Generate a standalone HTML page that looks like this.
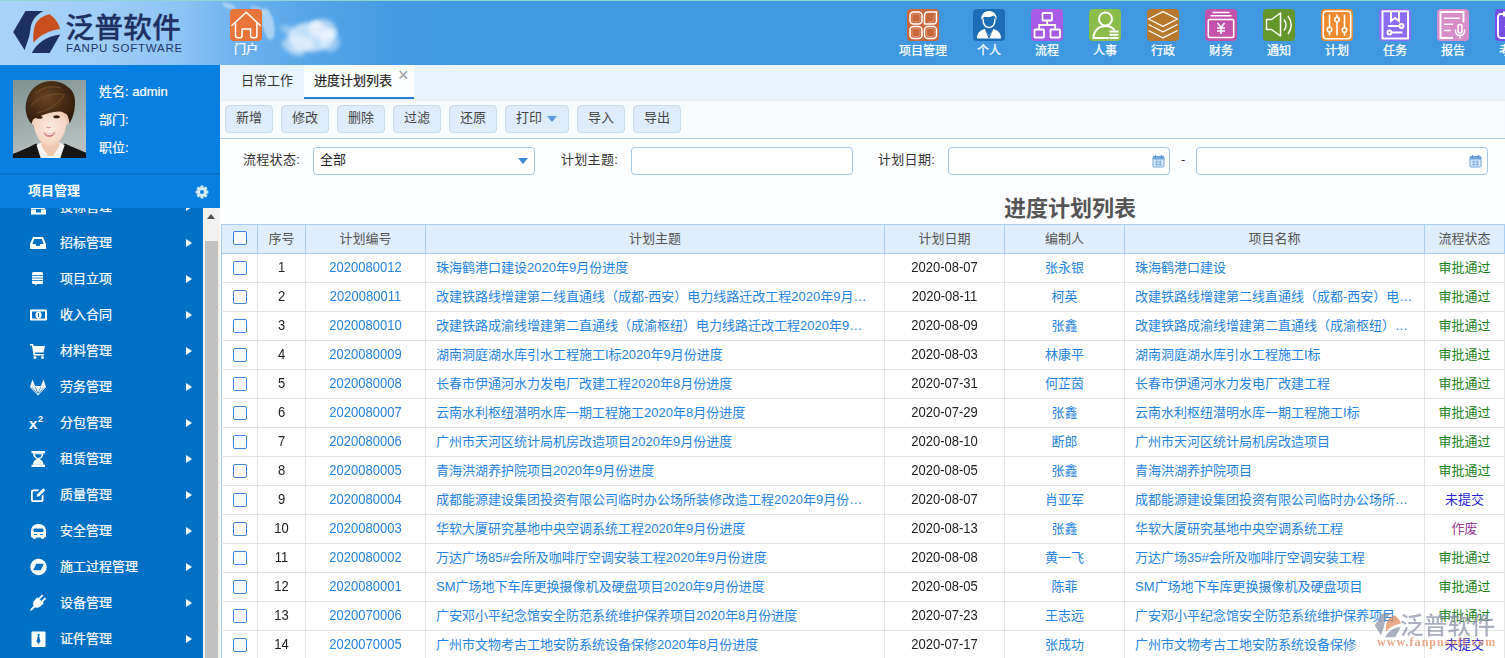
<!DOCTYPE html>
<html lang="zh-CN">
<head>
<meta charset="utf-8">
<title>进度计划列表</title>
<style>
*{box-sizing:border-box;margin:0;padding:0}
html,body{width:1505px;height:658px;overflow:hidden;background:#fcfeff}
body{font-family:"Liberation Sans","Noto Sans CJK SC",sans-serif;font-size:13px;color:#333;position:relative}
.abs{position:absolute}
#hdr{left:0;top:0;width:1505px;height:65px;background:linear-gradient(90deg,#a9d3f9 0px,#a0cef8 100px,#8dc4f4 180px,#6fb3ee 235px,#55a5e8 310px,#459be2 390px,#3f98e0 460px,#3f98e0 100%);overflow:hidden}
#hdr .topline{left:0;top:0;width:1505px;height:1px;background:#8fd6d2}
.cloud{border-radius:50%;filter:blur(3px);background:rgba(255,255,255,.75)}
.logo-cn{left:65.5px;top:7.5px;font-size:28.6px;font-weight:500;color:#1e2f62;letter-spacing:0.3px;line-height:40px;white-space:nowrap;-webkit-text-stroke:.3px #1e2f62}
.logo-en{left:66px;top:41px;font-size:11.5px;color:#1f3468;letter-spacing:0.76px;line-height:14px;white-space:nowrap}
.nav{top:9px;width:60px;text-align:center;color:#fff;font-size:12px;line-height:14px;white-space:nowrap;-webkit-text-stroke:.25px #fff}
.nav .ic{display:block;margin:0 auto 2.5px;width:32px;height:32px;border-radius:4px}
.nav svg{display:block}
#side{left:0;top:65px;width:220px;height:593px;background:#0880e2}
.pl{left:99px;color:#fff;font-size:13px;line-height:16px;white-space:nowrap;-webkit-text-stroke:.2px #fff}
#side .sep{left:0;top:107.5px;width:220px;height:2.5px;background:#0b70c8}
#side .title{left:28px;top:117px;color:#fff;font-weight:bold;font-size:13px;line-height:18px}
#menu{left:0;top:143px;width:203px;height:450px;background:#0070c4;overflow:hidden}
.mi{left:0;width:203px;height:36px;color:#fff;font-size:13px;line-height:36px;-webkit-text-stroke:.2px #fff}
.mi .t{position:absolute;left:60px;top:0;white-space:nowrap}
.mi .ar{position:absolute;left:186px;top:13.5px;width:0;height:0;border-left:6px solid #fff;border-top:4.5px solid transparent;border-bottom:4.5px solid transparent}
.mi svg{position:absolute;left:29px;top:9px}
#sb{left:203px;top:143px;width:17px;height:450px;background:#f1f1f1}
#sb .th{left:2px;top:33px;width:13px;height:420px;background:#c1c1c1}
#sb .up{left:4px;top:6px;width:0;height:0;border-bottom:5px solid #505050;border-left:4.5px solid transparent;border-right:4.5px solid transparent}
#tabs{left:220px;top:65px;width:1285px;height:34px;background:#e8f4fe}
.tab{top:0;height:34px;line-height:32px;font-size:13px;color:#333;white-space:nowrap}
.tab.act{background:#fcfeff;border-bottom:2px solid #2b7fd0;color:#222;-webkit-text-stroke:.2px #222}
#tb{left:220px;top:99px;width:1285px;height:40px;background:#f8fbff;border-bottom:1px solid #a9cdee;box-shadow:inset 0 3px 3px -2px rgba(150,180,210,.3)}
.btn{top:6px;height:28px;border:1px solid #c6dcf1;background:#deedfb;border-radius:4px;color:#444;font-size:13px;line-height:24px;text-align:center;white-space:nowrap}
.lbl{top:151px;font-size:13px;color:#333;line-height:18px;white-space:nowrap;letter-spacing:.3px}
.inp{top:147px;height:28px;border:1px solid #a5c9ea;border-radius:4px;background:#fff}
#ttl{left:220px;top:193.5px;width:1700px;text-align:center;font-size:22px;font-weight:bold;color:#555;line-height:30px}
#grid{left:221px;top:224px;width:1283px;border-collapse:collapse;table-layout:fixed;font-size:13px}
#grid th{height:29px;background:#deeefc;border:1px solid #a9cdee;font-weight:normal;color:#555;text-align:center;padding:0}
#grid thead tr{border-top:1px solid #8fc0ec}
#grid td{height:29px;border:1px solid #e4e4e4;text-align:center;padding:0;white-space:nowrap;overflow:hidden;background:#fff}
#grid td:first-child,#grid th:first-child{border-left:1px solid #a9cdee}
#grid td.n{color:#222}
#grid td.a,#grid td.l{color:#2683de}
.d{display:inline-block;transform:scaleY(1.15);transform-origin:50% 81%}
#grid td.l{text-align:left;padding:0 10px}
#grid td.l div{overflow:hidden;text-overflow:ellipsis;white-space:nowrap}
#grid td{padding-bottom:2px}
#grid th,#grid td.c,#grid td.l{padding-bottom:4px}
.s1{color:#1a821a}.s2{color:#2a1fd8}.s3{color:#9a3a9a}
.cb{display:inline-block;width:14px;height:14px;border:1px solid #3b86d8;border-radius:2px;background:#fff;vertical-align:middle}
</style>
</head>
<body>
<div id="hdr" class="abs">
  <svg class="abs" style="left:200px;top:0" width="170" height="65" viewBox="200 0 170 65">
    <defs><filter id="cb" x="-30%" y="-30%" width="160%" height="160%"><feGaussianBlur stdDeviation="2.200"/></filter><filter id="cb2" x="-30%" y="-30%" width="160%" height="160%"><feGaussianBlur stdDeviation="1.300"/></filter></defs>
    <g filter="url(#cb)" fill="#fff">
      <ellipse cx="311" cy="37" rx="23" ry="15" opacity=".62"/>
      <ellipse cx="322" cy="29" rx="14" ry="10" opacity=".5"/>
      <ellipse cx="298" cy="44" rx="16" ry="9" opacity=".45"/>
      <ellipse cx="330" cy="42" rx="10" ry="10" opacity=".4"/>
      <ellipse cx="288" cy="30" rx="8" ry="4" opacity=".35" transform="rotate(25 288 30)"/>
      <ellipse cx="296" cy="52" rx="9" ry="4" opacity=".35" transform="rotate(20 296 52)"/>
    </g>
    <g filter="url(#cb2)" fill="#fff">
      <ellipse cx="268" cy="24" rx="6" ry="16" opacity=".45" transform="rotate(-12 268 24)"/>
      <ellipse cx="258" cy="10" rx="8" ry="3" opacity=".3" transform="rotate(25 258 10)"/>
      <ellipse cx="229" cy="6" rx="7" ry="2.500" opacity=".4" transform="rotate(20 229 6)"/>
      <ellipse cx="316" cy="24" rx="6" ry="4" opacity=".4"/>
      <ellipse cx="333" cy="33" rx="5" ry="5" opacity=".35"/>
    </g>
  </svg>
  <div class="abs topline"></div>
  <svg class="abs" style="left:0;top:0" width="70" height="65" viewBox="0 0 70 65">
    <path d="M25.500 11.100H43.300C36 15 31.800 20.500 30.700 27.500 30.200 31 29.700 34 29.200 36.600L24.600 50 13.200 32z" fill="#1e2f62"/>
    <path d="M49.700 14.300C55 18 58.500 23 60.200 28.900 50 30 40 35 33.300 42.600 33 36 33.500 31 34.600 26.600 36.500 20 42 16 49.700 14.300z" fill="#c8501e"/>
    <path d="M60.200 34.400L49.700 53H31.900C36 44 46 36 60.200 34.400z" fill="#1e2f62"/>
  </svg>
  <div class="abs logo-cn">泛普软件</div>
  <div class="abs logo-en">FANPU SOFTWARE</div>
  <div class="nav abs" style="left:216px"><span class="ic" style="background:#e8763a;margin-bottom:1.500px"><svg width="32" height="32" viewBox="0 0 32 32"><g fill="none" stroke="#fff" stroke-width="1.500" stroke-linejoin="round" stroke-linecap="round"><path d="M2 16.500L16.200 3.300 30.300 16.500"/><path d="M5.500 13.500v13q0 2.300 2.300 2.300h2q2.300 0 2.300-2.300v-6.500h8.500v6.500q0 2.300 2.300 2.300h1.700q2.300 0 2.300-2.300v-13"/></g></svg></span>门户</div>
<div class="nav abs" style="left:893px"><span class="ic" style="background:#c8673a"><svg width="32" height="32" viewBox="0 0 32 32"><g fill="none" stroke="#fff" stroke-width="1.500"><rect x="3" y="3" width="12" height="12" rx="3.500"/><path d="M17.500 15v-8.500q0-3.500 3.500-3.500h8.500v8.500q0 3.500-3.500 3.500z"/><rect x="3" y="17.500" width="12" height="12" rx="3.500"/><rect x="17.500" y="17.500" width="12" height="12" rx="3.500"/></g><g fill="none" stroke="#fff" stroke-width=".6" opacity=".5"><rect x="5" y="5" width="8" height="8" rx="2"/><rect x="5" y="19.500" width="8" height="8" rx="2"/><rect x="19.500" y="19.500" width="8" height="8" rx="2"/><path d="M27 6v4q0 3-3 3h-3"/></g></svg></span>项目管理</div>
<div class="nav abs" style="left:959px"><span class="ic" style="background:#1c6db5"><svg width="32" height="32" viewBox="0 0 32 32"><path d="M8.500 11c-1-5 2.500-9 7.500-9s8.500 4 7.500 9c-.5-2-1.500-3.500-3-4.500-2.500 1.500-6 1.800-9 1.200-1.500 1-2.500 2-3 3.300z" fill="#fff"/><path d="M10 9.500c0 5 2 9 6 9s6-4 6-9" fill="none" stroke="#fff" stroke-width="1.300"/><path d="M4 29.500c0-5.500 2.500-8 8-9.500l4 6.500 4-6.500c5.500 1.500 8 4 8 9.500z" fill="#fff"/><path d="M12.500 20.500l3.500 8.500 3.500-8.500M16 22v7" fill="none" stroke="#1c6db5" stroke-width="1"/></svg></span>个人</div>
<div class="nav abs" style="left:1017px"><span class="ic" style="background:#a75be6"><svg width="32" height="32" viewBox="0 0 32 32"><g fill="none" stroke="#fff" stroke-width="1.800"><rect x="11.500" y="4" width="9.500" height="7.500" rx=".8"/><rect x="3.500" y="20.500" width="9.500" height="8" rx=".8"/><rect x="19.500" y="20.500" width="9.500" height="8" rx=".8"/><path d="M16.200 11.500v4.500M8.200 20.500v-4.500h16v4.500"/></g></svg></span>流程</div>
<div class="nav abs" style="left:1075px"><span class="ic" style="background:#8bbd4a"><svg width="32" height="32" viewBox="0 0 32 32"><g fill="none" stroke="#fff" stroke-width="2"><circle cx="16.500" cy="10" r="6.500"/><path d="M20 29H4.500c0-7 5-12 12-12 4 0 7 1.500 9 4"/></g><path d="M20.500 22.500h9M20.500 25.800h9M20.500 29h9" stroke="#fff" stroke-width="2"/></svg></span>人事</div>
<div class="nav abs" style="left:1133px"><span class="ic" style="background:#b7782c"><svg width="32" height="32" viewBox="0 0 32 32"><g fill="none" stroke="#fff" stroke-width="1.300" stroke-linejoin="round"><path d="M16 2.700l14.500 7.300L16 17.300 1.500 10z"/><path d="M1.500 15.500L16 22.800l14.500-7.300"/><path d="M1.500 21.500L16 28.800l14.500-7.300"/></g></svg></span>行政</div>
<div class="nav abs" style="left:1191px"><span class="ic" style="background:#c352ad"><svg width="32" height="32" viewBox="0 0 32 32"><g fill="none" stroke="#fff" stroke-width="1.600"><path d="M7.500 3.500h17M5.500 6.800h21"/><rect x="3.300" y="10.500" width="25.400" height="18" rx="1.500"/><path d="M12.500 14l3.500 4.500 3.500-4.500M16 18.500v6.500M12 19h8M12 22h8"/></g></svg></span>财务</div>
<div class="nav abs" style="left:1249px"><span class="ic" style="background:#64962c"><svg width="32" height="32" viewBox="0 0 32 32"><g fill="none" stroke="#fff" stroke-width="1.500" stroke-linejoin="round"><path d="M3.500 10.500h5l9-6.500v23l-9-6.500h-5z"/><path d="M21 10.500q4 5.500 0 11M25 7q6.500 9 0 18"/></g></svg></span>通知</div>
<div class="nav abs" style="left:1307px"><span class="ic" style="background:#ef8a2e"><svg width="32" height="32" viewBox="0 0 32 32"><g fill="none" stroke="#fff" stroke-width="1.600"><rect x="2.300" y="2.300" width="27.400" height="27.400" rx="3"/><path d="M8.500 5.500v12.500M8.500 23v3.500M16 5.500v2.500M16 13v13.500M23.500 5.500v13M23.500 23.500v3"/><circle cx="8.500" cy="20.500" r="2.300"/><circle cx="16" cy="10.500" r="2.300"/><circle cx="23.500" cy="21" r="2.300"/></g></svg></span>计划</div>
<div class="nav abs" style="left:1365px"><span class="ic" style="background:#8c6df4"><svg width="32" height="32" viewBox="0 0 32 32"><g fill="none" stroke="#fff" stroke-width="1.900"><rect x="3.500" y="2.300" width="25.500" height="27.200"/><path d="M12 2.500v9.500l4-3 4 3v-9.500M9 17h11M12.500 23.500h11"/><circle cx="22.500" cy="17" r="2"/><circle cx="10.500" cy="23.500" r="2"/></g></svg></span>任务</div>
<div class="nav abs" style="left:1423px"><span class="ic" style="background:#d78dc8"><svg width="32" height="32" viewBox="0 0 32 32"><g fill="none" stroke="#fff" stroke-width="1.900"><path d="M16 29H3.500v-26h23V13.500"/><path d="M7 9.300h15.500M7 15.200h9M7 21.500h7" stroke-width="1.500"/><rect x="21" y="15.500" width="4" height="8.500" rx="2" stroke-width="1.400"/><path d="M18.300 20.500q0 6 4.700 6t4.700-6M23 26.500v3" stroke-width="1.400"/></g></svg></span>报告</div>
<div class="nav abs" style="left:1481px"><span class="ic" style="background:#7a4ce6"><svg width="32" height="32" viewBox="0 0 32 32"><g fill="none" stroke="#fff" stroke-width="1.900"><rect x="3" y="5" width="26" height="24" rx="3"/><path d="M9 3.500h14v3H9zM10 17l4.500 4.500 8-8"/></g></svg></span>考勤</div>
</div>
<div id="side" class="abs">
  <svg class="abs" style="left:13px;top:15px" width="73" height="78" viewBox="0 0 73 78">
    <defs>
      <linearGradient id="pbg" x1="0" y1="0" x2="0.300" y2="1"><stop offset="0" stop-color="#7f908f"/><stop offset=".5" stop-color="#9aa8a8"/><stop offset="1" stop-color="#b7c0bf"/></linearGradient>
      <radialGradient id="skin" cx=".5" cy=".55" r=".6"><stop offset="0" stop-color="#fdece0"/><stop offset=".7" stop-color="#f3d4c0"/><stop offset="1" stop-color="#dcae95"/></radialGradient>
      <radialGradient id="hair" cx=".42" cy=".4" r=".65"><stop offset="0" stop-color="#6a4524"/><stop offset=".55" stop-color="#472c15"/><stop offset="1" stop-color="#2f1d0d"/></radialGradient>
      <filter id="pf" x="-10%" y="-10%" width="120%" height="120%"><feGaussianBlur stdDeviation=".6"/></filter>
      <clipPath id="pc"><rect width="73" height="78"/></clipPath>
    </defs>
    <rect width="73" height="78" fill="url(#pbg)"/>
    <g clip-path="url(#pc)"><g filter="url(#pf)">
      <path d="M-2 80V74.500C6 71.500 15 68 23 63.500L37 72 51.700 63.500C59 67 67 70 75 73.500V80z" fill="#141519"/>
      <path d="M23.500 65l4.500 14h19l4.700-14-6-3H29z" fill="#f5f4f2"/>
      <path d="M28.500 56h18v10L40 76h-5l-6.500-10z" fill="#efc8b0"/>
      <path d="M20 36C20 28 26 24 37 24S54 28 54 36C55.800 36 56.500 38 56 41 55.500 43.500 54.500 45 53.300 45 52 56 45 66 37 66S22 56 20.700 45C19.500 45 18.500 43.500 18 41 17.500 38 18.200 36 20 36z" fill="url(#skin)"/>
      <path d="M30.500 52.300q5.700 2 12 0-1.800 4.700-6.200 4.700t-5.800-4.700z" fill="#d78480"/>
      <path d="M32 53q4.500 1.200 9 0-1.300 2-4.600 2T32 53z" fill="#fff"/>
      <path d="M33.500 47q2.200 1.300 4.500 0" stroke="#d8a189" stroke-width="1.100" fill="none"/>
      <ellipse cx="26.300" cy="37.200" rx="3.200" ry="1.500" fill="#33241e"/><ellipse cx="43.600" cy="36.800" rx="3.200" ry="1.500" fill="#33241e"/>
      <path d="M18.500 44C13 38 11.500 28 13.500 21 15.500 12 22 5 30 2.500 38 0 49 1 55.500 7.500 60 10 62.500 17 62 24 61.700 31 60 38 56.500 43.500 56 40 55.500 37.500 54 34.500 51.500 33 49 31.500 46.500 31.500 42 31.500 37 32.500 33 34 28 35.800 24 37.500 20.500 39 19.500 40.500 19 42 18.500 44z" fill="url(#hair)"/>
      <path d="M22 14c6-6 16-9 26-6M18 26c8-10 22-14 34-11M24 33c10-2 20-8 27-17" stroke="#7a5530" stroke-width="1.400" fill="none" opacity=".55"/>
    </g></g>
  </svg>
  <div class="abs pl" style="top:19px">姓名: admin</div>
  <div class="abs pl" style="top:47px">部门:</div>
  <div class="abs pl" style="top:75px">职位:</div>
  <div class="abs sep"></div>
  <div class="abs title">项目管理</div>
  <svg class="abs" style="left:195px;top:119.5px" width="14" height="14" viewBox="0 0 16 16"><g fill="#d6ebfb"><circle cx="8" cy="8" r="5.200"/><g id="tg"><rect x="6.200" y="0.700" width="3.600" height="14.600" rx=".6"/></g><rect x="6.200" y="0.700" width="3.600" height="14.600" rx=".6" transform="rotate(45 8 8)"/><rect x="6.200" y="0.700" width="3.600" height="14.600" rx=".6" transform="rotate(90 8 8)"/><rect x="6.200" y="0.700" width="3.600" height="14.600" rx=".6" transform="rotate(135 8 8)"/></g><circle cx="8" cy="8" r="2.300" fill="#0880e2"/></svg>
  <div id="menu" class="abs">
<div class="mi abs" style="top:-19px"><svg width="19" height="18" viewBox="0 0 19 18"><path d="M2 11.500h5v3h5v-3h5v5H2zM4 4h10l2 7H2z" fill="#fff"/></svg><span class="t">投标管理</span><span class="ar"></span></div>
<div class="mi abs" style="top:17px"><svg width="19" height="18" viewBox="0 0 19 18"><path d="M4 3h10l3 7v5H1v-5zM5.2 5L3.4 10h3l1 2h3.200l1-2h3L12.800 5z" fill="#fff" fill-rule="evenodd"/></svg><span class="t">招标管理</span><span class="ar"></span></div>
<div class="mi abs" style="top:53px"><svg width="19" height="18" viewBox="0 0 19 18"><path d="M3 3.500Q3 2 4.500 2h8Q14 2 14 3.500v9Q14 14 12.500 14H8l-1.500 2V14h-2Q3 14 3 12.500z" fill="#fff"/><path d="M3 5.500h11M3 8h11M3 10.500h11" stroke="#0070c4" stroke-width="0.8"/></svg><span class="t">项目立项</span><span class="ar"></span></div>
<div class="mi abs" style="top:89px"><svg width="19" height="18" viewBox="0 0 19 18"><rect x="1" y="3.500" width="17" height="11" rx="1" fill="#fff"/><rect x="3" y="5.500" width="13" height="7" fill="#0070c4"/><ellipse cx="9.500" cy="9" rx="3" ry="3.600" fill="#fff"/><rect x="9" y="7" width="1" height="4" fill="#0070c4"/></svg><span class="t">收入合同</span><span class="ar"></span></div>
<div class="mi abs" style="top:125px"><svg width="19" height="18" viewBox="0 0 19 18"><path d="M1 2h3l.6 2H16l-1.500 6.500H5.500L6 12h9v1.500H4.500L3 3.500H1z" fill="#fff"/><circle cx="6" cy="15.500" r="1.500" fill="#fff"/><circle cx="13.500" cy="15.500" r="1.500" fill="#fff"/></svg><span class="t">材料管理</span><span class="ar"></span></div>
<div class="mi abs" style="top:161px"><svg width="19" height="18" viewBox="0 0 19 18"><path d="M1 9l2.500-7.500L6 8h6l2.500-6.500L17 9l-8 8.500z" fill="#fff"/><path d="M6.300 9L9 15.500 11.700 9M3 9.500l5 6M15 9.500l-5 6" stroke="#0070c4" stroke-width=".7" fill="none"/></svg><span class="t">劳务管理</span><span class="ar"></span></div>
<div class="mi abs" style="top:197px"><svg width="19" height="18" viewBox="0 0 19 18"><text x="0" y="15" font-size="15" font-weight="bold" fill="#fff" font-family="Liberation Sans,sans-serif">x</text><text x="9" y="8" font-size="9" font-weight="bold" fill="#fff" font-family="Liberation Sans,sans-serif">2</text></svg><span class="t">分包管理</span><span class="ar"></span></div>
<div class="mi abs" style="top:233px"><svg width="19" height="18" viewBox="0 0 19 18"><path d="M2.500 1h13.500v2.200H2.500zM2.500 14.800h13.500V17H2.500z" fill="#fff"/><path d="M4 3.200h10.500q0 4-3.800 5.800 3.800 1.800 3.800 5.800H4q0-4 3.800-5.800Q4 7.200 4 3.200z" fill="#fff"/><path d="M5.600 4.200h7.300q-.4 2.600-3.650 4-3.250-1.400-3.650-4z" fill="#0070c4"/></svg><span class="t">租赁管理</span><span class="ar"></span></div>
<div class="mi abs" style="top:269px"><svg width="19" height="18" viewBox="0 0 19 18"><path d="M4 3.500h6.500l-1.800 1.800H4.500q-.7 0-.7.700v7.500q0 .7.700.7h7.500q.7 0 .7-.7V10l1.800-1.800V14q0 2-2 2H4q-2 0-2-2V5.500q0-2 2-2z" fill="#fff"/><path d="M14.300 2.200l2 2-6 6-2.600.6.600-2.600z" fill="#fff"/></svg><span class="t">质量管理</span><span class="ar"></span></div>
<div class="mi abs" style="top:305px"><svg width="19" height="18" viewBox="0 0 19 18"><path d="M2 9.500Q2 2 9.500 2T17 9.500V14q0 1.500-1.500 1.500h-.3q-.2 1.500-1.700 1.500t-1.700-1.500H7.200Q7 17 5.500 17t-1.700-1.500h-.3Q2 15.500 2 14z" fill="#fff"/><rect x="4.500" y="6.500" width="10" height="3.500" rx="1.200" fill="#0070c4"/><path d="M5 12.500h3M11 12.500h3" stroke="#0070c4" stroke-width="1.200"/></svg><span class="t">安全管理</span><span class="ar"></span></div>
<div class="mi abs" style="top:341px"><svg width="19" height="18" viewBox="0 0 19 18"><circle cx="9.500" cy="9" r="8.200" fill="#fff"/><path d="M7.200 5.800h7.600l-3 6.400H4.200z" fill="#0070c4"/></svg><span class="t">施工过程管理</span><span class="ar"></span></div>
<div class="mi abs" style="top:377px"><svg width="19" height="18" viewBox="0 0 19 18"><path d="M13 0.500l1.300 1.300-3.500 3.500 1.600 1.600 3.500-3.500 1.300 1.300-3.500 3.500 1 1-2.800 2.800q-2.800 2.800-5.800 1.200L3.500 16 1 17l1-2.500 2.600-2.600q-1.600-3 1.200-5.800L8.600 3.300l1 1z" fill="#fff"/></svg><span class="t">设备管理</span><span class="ar"></span></div>
<div class="mi abs" style="top:413px"><svg width="19" height="18" viewBox="0 0 19 18"><rect x="2.500" y="1.500" width="14" height="15.500" rx="1" fill="#fff"/><path d="M8.300 4h2.400l-.5 2.200 1.300 5.300-2 2.500-2-2.500 1.300-5.300z" fill="#0070c4"/></svg><span class="t">证件管理</span><span class="ar"></span></div>
  </div>
  <div id="sb" class="abs"><div class="abs up"></div><div class="abs th"></div></div>
</div>
<div id="tabs" class="abs">
  <div class="tab abs" style="left:21px">日常工作</div>
  <div class="tab act abs" style="left:84px;width:110px;padding-left:10px">进度计划列表<span style="position:absolute;left:94px;top:-6px;font-size:18px;color:#999;font-weight:normal;-webkit-text-stroke:0">×</span></div>
</div>
<div id="tb" class="abs">
  <div class="btn abs" style="left:5px;width:48px">新增</div>
  <div class="btn abs" style="left:61px;width:48px">修改</div>
  <div class="btn abs" style="left:117px;width:48px">删除</div>
  <div class="btn abs" style="left:173px;width:48px">过滤</div>
  <div class="btn abs" style="left:229px;width:48px">还原</div>
  <div class="btn abs" style="left:285px;width:64px;text-align:left;padding-left:10px">打印<span style="position:absolute;left:41px;top:10px;border-top:6px solid #5b9ad8;border-left:5px solid transparent;border-right:5px solid transparent"></span></div>
  <div class="btn abs" style="left:357px;width:48px">导入</div>
  <div class="btn abs" style="left:413px;width:48px">导出</div>
</div>
<div class="lbl abs" style="left:243px">流程状态:</div>
<div class="inp abs" style="left:313px;width:222px"><span style="position:absolute;left:6px;top:3px;line-height:18px;color:#222">全部</span><span style="position:absolute;left:204px;top:10px;border-top:6px solid #3b86d8;border-left:5px solid transparent;border-right:5px solid transparent"></span></div>
<div class="lbl abs" style="left:561px">计划主题:</div>
<div class="inp abs" style="left:631px;width:222px"></div>
<div class="lbl abs" style="left:878px">计划日期:</div>
<div class="inp abs" style="left:948px;width:222px"><svg style="position:absolute;left:203px;top:6px" width="13" height="14" viewBox="0 0 13 14"><rect x="1" y="2.500" width="11" height="10.500" rx="1" fill="#dbe9f8" stroke="#6fa4dc"/><rect x="1" y="2.500" width="11" height="3" fill="#6fa4dc"/><path d="M3.500 1v3M9.500 1v3" stroke="#5a90cc" stroke-width="1.200"/><path d="M3 8h7M3 10.500h7M4.800 6v6M8.200 6v6" stroke="#6fa4dc" stroke-width=".8"/></svg></div>
<div class="lbl abs" style="left:1181px">-</div>
<div class="inp abs" style="left:1196px;width:292px"><svg style="position:absolute;left:272px;top:6px" width="13" height="14" viewBox="0 0 13 14"><rect x="1" y="2.500" width="11" height="10.500" rx="1" fill="#dbe9f8" stroke="#6fa4dc"/><rect x="1" y="2.500" width="11" height="3" fill="#6fa4dc"/><path d="M3.500 1v3M9.500 1v3" stroke="#5a90cc" stroke-width="1.200"/><path d="M3 8h7M3 10.500h7M4.800 6v6M8.200 6v6" stroke="#6fa4dc" stroke-width=".8"/></svg></div>
<div id="ttl" class="abs">进度计划列表</div>
<table id="grid" class="abs"><colgroup><col style="width:36px"><col style="width:48px"><col style="width:120px"><col style="width:459px"><col style="width:120px"><col style="width:120px"><col style="width:300px"><col style="width:80px"></colgroup>
<thead><tr><th><span class="cb"></span></th><th>序号</th><th>计划编号</th><th>计划主题</th><th>计划日期</th><th>编制人</th><th>项目名称</th><th>流程状态</th></tr></thead><tbody>
<tr><td><span class="cb"></span></td><td class="n"><span class="d">1</span></td><td class="a"><span class="d">2020080012</span></td><td class="l"><div>珠海鹤港口建设2020年9月份进度</div></td><td class="n"><span class="d">2020-08-07</span></td><td class="a c">张永银</td><td class="l"><div>珠海鹤港口建设</div></td><td class="c s1">审批通过</td></tr>
<tr><td><span class="cb"></span></td><td class="n"><span class="d">2</span></td><td class="a"><span class="d">2020080011</span></td><td class="l"><div>改建铁路线增建第二线直通线（成都-西安）电力线路迁改工程2020年9月份进度</div></td><td class="n"><span class="d">2020-08-11</span></td><td class="a c">柯英</td><td class="l"><div>改建铁路线增建第二线直通线（成都-西安）电力线路迁改工程</div></td><td class="c s1">审批通过</td></tr>
<tr><td><span class="cb"></span></td><td class="n"><span class="d">3</span></td><td class="a"><span class="d">2020080010</span></td><td class="l"><div>改建铁路成渝线增建第二直通线（成渝枢纽）电力线路迁改工程2020年9月份进度</div></td><td class="n"><span class="d">2020-08-09</span></td><td class="a c">张鑫</td><td class="l"><div>改建铁路成渝线增建第二直通线（成渝枢纽）电力线路迁改工程</div></td><td class="c s1">审批通过</td></tr>
<tr><td><span class="cb"></span></td><td class="n"><span class="d">4</span></td><td class="a"><span class="d">2020080009</span></td><td class="l"><div>湖南洞庭湖水库引水工程施工I标2020年9月份进度</div></td><td class="n"><span class="d">2020-08-03</span></td><td class="a c">林康平</td><td class="l"><div>湖南洞庭湖水库引水工程施工I标</div></td><td class="c s1">审批通过</td></tr>
<tr><td><span class="cb"></span></td><td class="n"><span class="d">5</span></td><td class="a"><span class="d">2020080008</span></td><td class="l"><div>长春市伊通河水力发电厂改建工程2020年8月份进度</div></td><td class="n"><span class="d">2020-07-31</span></td><td class="a c">何芷茵</td><td class="l"><div>长春市伊通河水力发电厂改建工程</div></td><td class="c s1">审批通过</td></tr>
<tr><td><span class="cb"></span></td><td class="n"><span class="d">6</span></td><td class="a"><span class="d">2020080007</span></td><td class="l"><div>云南水利枢纽潜明水库一期工程施工2020年8月份进度</div></td><td class="n"><span class="d">2020-07-29</span></td><td class="a c">张鑫</td><td class="l"><div>云南水利枢纽潜明水库一期工程施工I标</div></td><td class="c s1">审批通过</td></tr>
<tr><td><span class="cb"></span></td><td class="n"><span class="d">7</span></td><td class="a"><span class="d">2020080006</span></td><td class="l"><div>广州市天河区统计局机房改造项目2020年9月份进度</div></td><td class="n"><span class="d">2020-08-10</span></td><td class="a c">断郎</td><td class="l"><div>广州市天河区统计局机房改造项目</div></td><td class="c s1">审批通过</td></tr>
<tr><td><span class="cb"></span></td><td class="n"><span class="d">8</span></td><td class="a"><span class="d">2020080005</span></td><td class="l"><div>青海洪湖养护院项目2020年9月份进度</div></td><td class="n"><span class="d">2020-08-05</span></td><td class="a c">张鑫</td><td class="l"><div>青海洪湖养护院项目</div></td><td class="c s1">审批通过</td></tr>
<tr><td><span class="cb"></span></td><td class="n"><span class="d">9</span></td><td class="a"><span class="d">2020080004</span></td><td class="l"><div>成都能源建设集团投资有限公司临时办公场所装修改造工程2020年9月份进度</div></td><td class="n"><span class="d">2020-08-07</span></td><td class="a c">肖亚军</td><td class="l"><div>成都能源建设集团投资有限公司临时办公场所装修改造工程</div></td><td class="c s2">未提交</td></tr>
<tr><td><span class="cb"></span></td><td class="n"><span class="d">10</span></td><td class="a"><span class="d">2020080003</span></td><td class="l"><div>华软大厦研究基地中央空调系统工程2020年9月份进度</div></td><td class="n"><span class="d">2020-08-13</span></td><td class="a c">张鑫</td><td class="l"><div>华软大厦研究基地中央空调系统工程</div></td><td class="c s3">作废</td></tr>
<tr><td><span class="cb"></span></td><td class="n"><span class="d">11</span></td><td class="a"><span class="d">2020080002</span></td><td class="l"><div>万达广场85#会所及咖啡厅空调安装工程2020年9月份进度</div></td><td class="n"><span class="d">2020-08-08</span></td><td class="a c">黄一飞</td><td class="l"><div>万达广场35#会所及咖啡厅空调安装工程</div></td><td class="c s1">审批通过</td></tr>
<tr><td><span class="cb"></span></td><td class="n"><span class="d">12</span></td><td class="a"><span class="d">2020080001</span></td><td class="l"><div>SM广场地下车库更换摄像机及硬盘项目2020年9月份进度</div></td><td class="n"><span class="d">2020-08-05</span></td><td class="a c">陈菲</td><td class="l"><div>SM广场地下车库更换摄像机及硬盘项目</div></td><td class="c s1">审批通过</td></tr>
<tr><td><span class="cb"></span></td><td class="n"><span class="d">13</span></td><td class="a"><span class="d">2020070006</span></td><td class="l"><div>广安邓小平纪念馆安全防范系统维护保养项目2020年8月份进度</div></td><td class="n"><span class="d">2020-07-23</span></td><td class="a c">王志远</td><td class="l"><div>广安邓小平纪念馆安全防范系统维护保养项目</div></td><td class="c s1">审批通过</td></tr>
<tr><td><span class="cb"></span></td><td class="n"><span class="d">14</span></td><td class="a"><span class="d">2020070005</span></td><td class="l"><div>广州市文物考古工地安防系统设备保修2020年8月份进度</div></td><td class="n"><span class="d">2020-07-17</span></td><td class="a c">张成功</td><td class="l"><div>广州市文物考古工地安防系统设备保修</div></td><td class="c s2">未提交</td></tr>
</tbody></table>
<div class="abs" style="left:1374px;top:612px;width:131px;height:42px;opacity:.72;pointer-events:none">
  <svg class="abs" style="left:0;top:1px" width="28" height="25" viewBox="12 10 50 44"><path d="M25.500 11.100H43.300C36 15 31.800 20.500 30.700 27.500 30.200 31 29.700 34 29.200 36.600L24.600 50 13.200 32z" fill="#8a93a8"/><path d="M49.700 14.300C55 18 58.500 23 60.200 28.900 50 30 40 35 33.300 42.600 33 36 33.500 31 34.600 26.600 36.500 20 42 16 49.700 14.300z" fill="#e08a5c"/><path d="M60.200 34.400L49.700 53H31.900C36 44 46 36 60.200 34.400z" fill="#8a93a8"/></svg>
  <div class="abs" style="left:26px;top:-1px;font-size:23.5px;font-weight:500;color:#8a93a8;line-height:30px;white-space:nowrap;letter-spacing:.3px">泛普软件</div>
  <div class="abs" style="left:3px;top:23px;font-family:'Liberation Serif',serif;font-size:12px;color:#e08a5c;line-height:14px;white-space:nowrap;letter-spacing:1.05px;font-weight:bold">www.fanpusoft.com</div>
</div>
</body>
</html>
